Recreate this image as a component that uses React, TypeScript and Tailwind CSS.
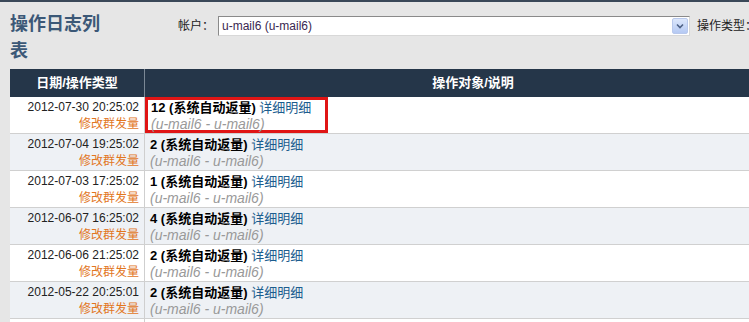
const rows = [
  { date: '2012-07-30 20:25:02', count: '12', boxed: true },
  { date: '2012-07-04 19:25:02', count: '2' },
  { date: '2012-07-03 17:25:02', count: '1' },
  { date: '2012-06-07 16:25:02', count: '4' },
  { date: '2012-06-06 21:25:02', count: '2' },
  { date: '2012-05-22 20:25:01', count: '2' },
]

const sans = "font-['Liberation_Sans','Noto_Sans_CJK_SC',sans-serif]"

export default function App() {
  return (
    <div className={`w-[749px] h-[322px] overflow-hidden bg-[#e6e6e6] border-t-2 border-[#3a4858] ${sans}`}>
      <div className="flex items-start pl-[10px] pt-[9px] h-[67px]">
        <h1 className="w-[100px] shrink-0 text-[18px] leading-[27px] font-bold text-[#3b5877]">操作日志列表</h1>
        <div className="flex shrink-0 items-center ml-[68px] mt-[5px] text-[12px] text-[#222]">
          <span className="w-[40px]">帐户：</span>
          <div className="flex items-center w-[472px] h-[20px] bg-white border border-[#8a8a8a] border-r-[#d8d8d8] border-b-[#d8d8d8]">
            <span className="flex-1 pl-[3px] text-[12px] text-[#3a2650]">u-mail6 (u-mail6)</span>
            <div className="flex items-center justify-center w-[16px] h-[16px] mr-[1px] rounded-[2px] bg-gradient-to-b from-[#dce7fb] to-[#b5c9f3] border border-[#b8c8ec]">
              <svg width="8" height="6" viewBox="0 0 8 6">
                <path d="M1 1.5 L4 4.5 L7 1.5" stroke="#4d6185" strokeWidth="1.6" fill="none" />
              </svg>
            </div>
          </div>
          <span className="ml-[7px] whitespace-nowrap">操作类型：</span>
        </div>
      </div>
      <div className="ml-[10px] w-[791px]">
        <div className="flex h-[28px] bg-[#253649] text-white text-[13px] font-bold">
          <div className="w-[135px] flex items-center justify-center border-r border-[#7b8895]">日期/操作类型</div>
          <div className="flex-1 flex items-center justify-center">操作对象/说明</div>
        </div>
        {rows.map((r, i) => (
          <div key={i} className={`flex h-[37px] border-b border-[#d0d0d0] ${i % 2 ? 'bg-[#eef1f5]' : 'bg-white'}`}>
            <div className="w-[135px] pr-[5px] pt-[2px] text-right border-r border-[#cfcfcf] leading-[17px]">
              <div className="text-[12px] text-[#222]">{r.date}</div>
              <div className="text-[12px] text-[#e2761e]">修改群发量</div>
            </div>
            <div className="flex-1">
              <div className={`w-[183px] h-[36px] ${r.boxed ? 'border-[3px] border-[#e01515] pl-[3px] pt-0 leading-[16px]' : 'pl-[5px] pt-[2px] leading-[17px]'}`}>
                <div className="text-[13px] whitespace-nowrap">
                  <span className="font-bold text-black">{r.count} (系统自动返量) </span>
                  <span className="text-[#1b5d8e]">详细明细</span>
                </div>
                <div className="text-[14px] italic text-[#999] whitespace-nowrap">(u-mail6 - u-mail6)</div>
              </div>
            </div>
          </div>
        ))}
        <div className="flex h-[37px] bg-white">
          <div className="w-[135px] border-r border-[#cfcfcf]" />
          <div className="flex-1" />
        </div>
      </div>
    </div>
  )
}
